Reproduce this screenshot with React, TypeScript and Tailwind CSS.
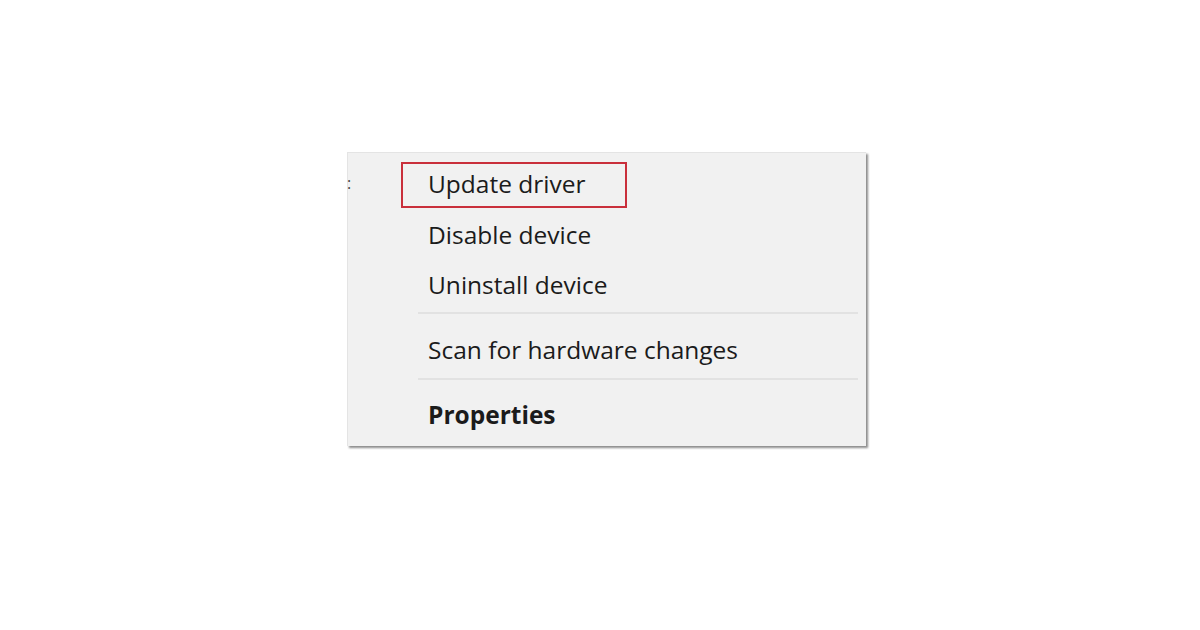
export default function App() {
  const font = { fontFamily: '"Open Sans", "Noto Sans", sans-serif' }

  return (
    <div className="w-[1200px] h-[630px] bg-white pt-[152px] pl-[347px]" style={font}>
      <div className="relative w-[519px] h-[294px] bg-[#f1f1f1] border-t border-l border-[#e4e4e4] shadow-[2px_2px_2px_rgba(0,0,0,0.45)] text-[24.5px] text-[#1b1b1b] pt-[7px] leading-none">
        <div className="absolute left-[-1px] top-[22px] text-[16px] leading-none text-[#444]">:</div>

        <div className="h-[50px] flex items-center pl-[53px]">
          <div className="w-[226px] h-[46px] border-2 border-[#c92f3b] flex items-center pl-[25px] pb-[2px]">
            Update driver
          </div>
        </div>
        <div className="h-[50px] flex items-center pl-[80px] pb-[0px]">Disable device</div>
        <div className="h-[50px] flex items-center pl-[80px] pb-[0px]">Uninstall device</div>

        <div className="ml-[70px] mr-[8px] h-[2px] bg-[#e2e2e2] mt-[2px]" />
        <div className="h-[64px] flex items-center pl-[80px] pt-[8px]">Scan for hardware changes</div>

        <div className="ml-[70px] mr-[8px] h-[2px] bg-[#e2e2e2]" />
        <div className="h-[62px] flex items-center pl-[80px] pt-[8px] font-bold">Properties</div>
      </div>
    </div>
  )
}
